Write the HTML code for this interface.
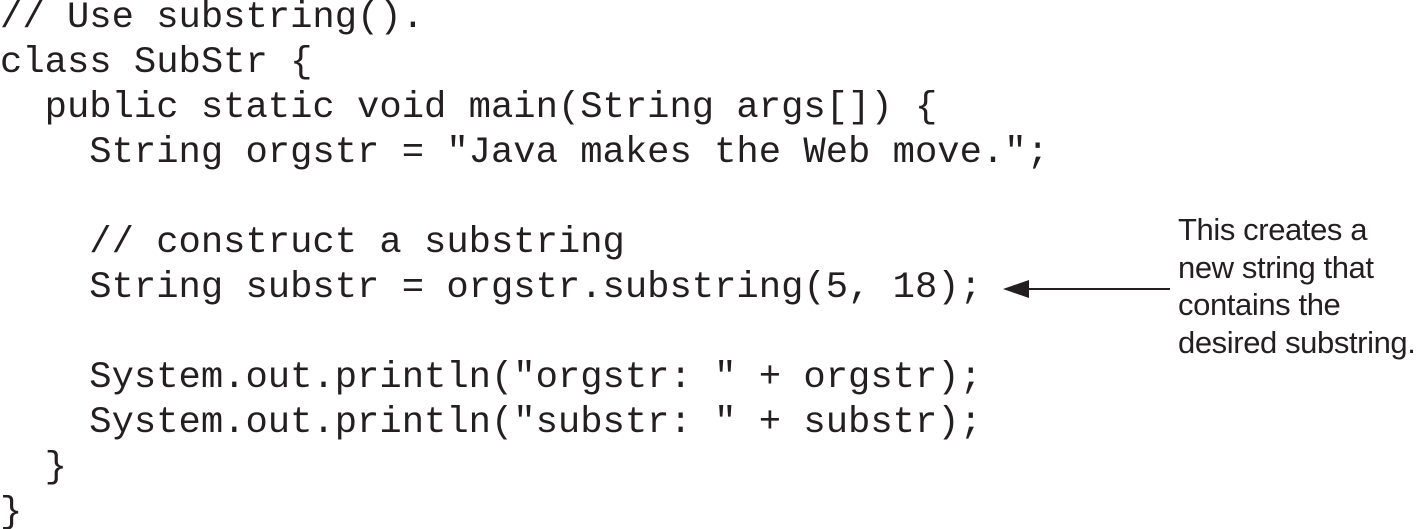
<!DOCTYPE html>
<html><head><meta charset="utf-8"><style>
html,body{margin:0;padding:0;background:#fff;width:1423px;height:529px;overflow:hidden;position:relative}
pre{position:absolute;left:0;top:-4px;margin:0;font-family:"Liberation Mono",monospace;font-size:37.2px;line-height:45px;color:#231f20}
.note{position:absolute;left:1178px;top:211px;font-family:"Liberation Sans",sans-serif;font-size:31px;line-height:37.5px;color:#231f20;letter-spacing:-0.4px}
svg{position:absolute;left:0;top:0}
</style></head><body>
<pre>// Use substring().
class SubStr {
  public static void main(String args[]) {
    String orgstr = "Java makes the Web move.";

    // construct a substring
    String substr = orgstr.substring(5, 18);

    System.out.println("orgstr: " + orgstr);
    System.out.println("substr: " + substr);
  }
}</pre>
<div class="note">This creates a<br>new string that<br>contains the<br>desired substring.</div>
<svg width="1423" height="529"><line x1="1025" y1="289" x2="1170" y2="289" stroke="#231f20" stroke-width="2"/><polygon points="1003,289 1029,280 1029,298" fill="#231f20"/></svg>
</body></html>
